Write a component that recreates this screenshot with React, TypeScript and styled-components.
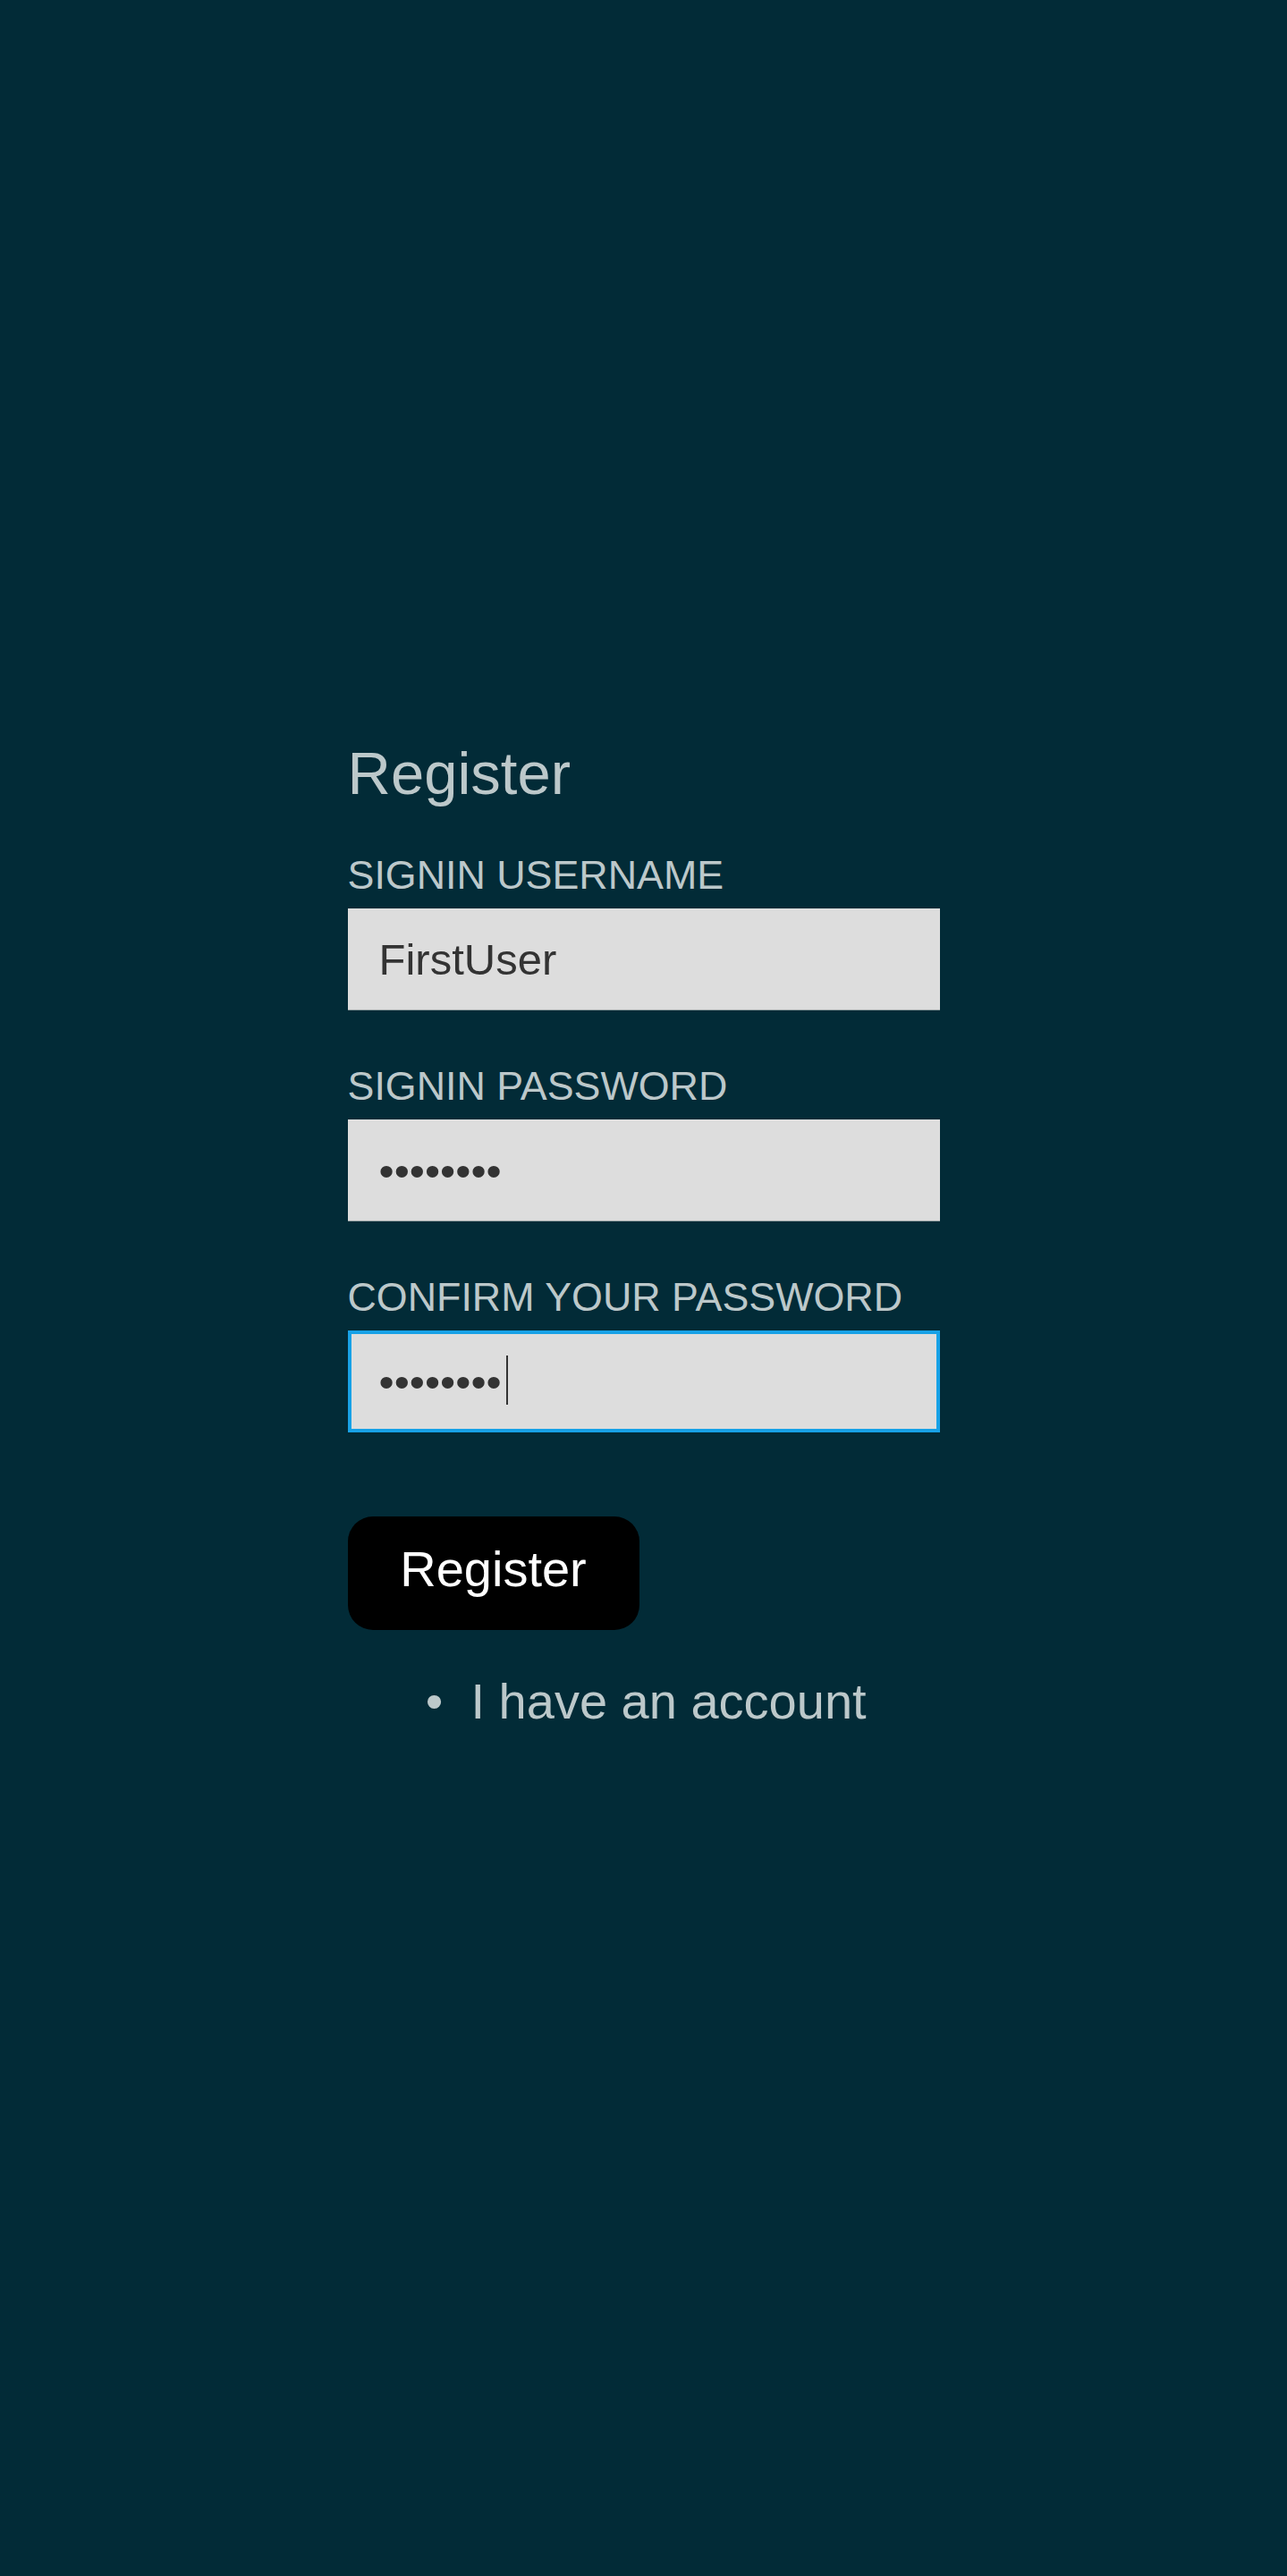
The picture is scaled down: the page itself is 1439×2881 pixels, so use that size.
import React from "react";
import styled, { createGlobalStyle } from "styled-components";

const GlobalStyle = createGlobalStyle`
  html, body {
    margin: 0;
    padding: 0;
    background: #022b37;
  }
  body {
    font-family: "Liberation Sans", Arial, sans-serif;
  }
`;

const Page = styled.main`
  min-height: 2881px;
  box-sizing: border-box;
  padding-top: 826px;
  display: flex;
  justify-content: center;
  background: #022b37;
`;

const Form = styled.form`
  width: 662px;
  display: flex;
  flex-direction: column;
  color: #bcc8ca;
`;

const Title = styled.h1`
  margin: 0 0 50px 0;
  font-size: 67px;
  line-height: 77px;
  font-weight: 400;
  color: #bcc8ca;
`;

const Field = styled.div`
  display: flex;
  flex-direction: column;
  margin-bottom: 59px;
  &:last-of-type {
    margin-bottom: 94px;
  }
`;

const Label = styled.label`
  font-size: 44.8px;
  line-height: 51px;
  text-transform: uppercase;
  color: #bcc8ca;
  margin-bottom: 12px;
`;

const InputWrap = styled.div`
  position: relative;
`;

const Input = styled.input<{ $focused?: boolean }>`
  display: block;
  width: 100%;
  box-sizing: border-box;
  height: 114px;
  margin: 0;
  padding: 0 ${(p) => (p.$focused ? 31 : 35)}px;
  font-family: "Liberation Sans", Arial, sans-serif;
  font-size: 49px;
  color: #333333;
  background: #dddddd;
  border: ${(p) => (p.$focused ? "4px solid #17a1e6" : "none")};
  border-bottom: ${(p) => (p.$focused ? "4px solid #17a1e6" : "1px solid #9ea7a9")};
  border-radius: 0;
  outline: none;
  caret-color: transparent;
`;

const Caret = styled.span`
  position: absolute;
  left: 177px;
  top: 28px;
  width: 2px;
  height: 55px;
  background: #333333;
`;

const SubmitButton = styled.button`
  align-self: flex-start;
  width: 326px;
  height: 127px;
  padding: 0 0 10px 0;
  border: none;
  border-radius: 28px;
  background: #000000;
  color: #ffffff;
  font-family: "Liberation Sans", Arial, sans-serif;
  font-size: 56px;
  line-height: 64px;
  cursor: pointer;
`;

const Links = styled.ul`
  margin: 48px 0 0 0;
  padding-left: 138px;
  list-style: disc;
  font-size: 56px;
  line-height: 64px;
  color: #bcc8ca;
`;

const LinkItem = styled.li`
  color: #bcc8ca;
  &::marker {
    content: "\u2022\u00a0\u00a0";
    color: #bcc8ca;
  }
`;

const TextLink = styled.a`
  color: #bcc8ca;
  text-decoration: none;
`;

export default function App() {
  return (
    <>
      <GlobalStyle />
      <Page>
        <Form onSubmit={(e) => e.preventDefault()}>
          <Title>Register</Title>
          <Field>
            <Label htmlFor="username">Signin username</Label>
            <InputWrap>
              <Input id="username" type="text" defaultValue="FirstUser" />
            </InputWrap>
          </Field>
          <Field>
            <Label htmlFor="password">Signin password</Label>
            <InputWrap>
              <Input id="password" type="password" defaultValue="password" />
            </InputWrap>
          </Field>
          <Field>
            <Label htmlFor="confirm">Confirm your password</Label>
            <InputWrap>
              <Input id="confirm" type="password" defaultValue="password" $focused />
              <Caret />
            </InputWrap>
          </Field>
          <SubmitButton type="submit">Register</SubmitButton>
          <Links>
            <LinkItem>
              <TextLink href="#">I have an account</TextLink>
            </LinkItem>
          </Links>
        </Form>
      </Page>
    </>
  );
}
